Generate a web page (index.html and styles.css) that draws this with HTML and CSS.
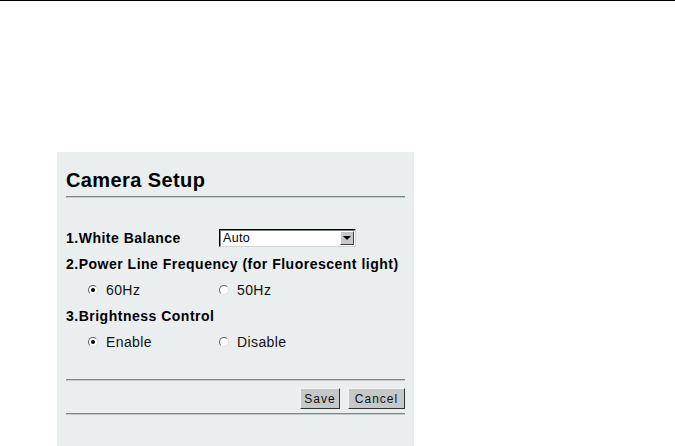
FILE: index.html
```html
<!DOCTYPE html>
<html>
<head>
<meta charset="utf-8">
<link rel="stylesheet" href="styles.css">
</head>
<body>
<div class="topbar"></div>
<div class="page">
  <div class="panel">
    <h1 class="title">Camera Setup</h1>
    <div class="rule"></div>
    <div class="form">
      <div class="row">
        <span class="label wb">1.White Balance</span>
        <span class="select"><span class="sel-text">Auto</span><span class="sel-btn"><span class="tri"></span></span></span>
      </div>
      <div class="row"><span class="label">2.Power Line Frequency (for Fluorescent light)</span></div>
      <div class="row opts">
        <span class="opt"><span class="radio on"></span>60Hz</span>
        <span class="opt"><span class="radio"></span>50Hz</span>
      </div>
      <div class="row"><span class="label">3.Brightness Control</span></div>
      <div class="row opts">
        <span class="opt"><span class="radio on"></span>Enable</span>
        <span class="opt"><span class="radio"></span>Disable</span>
      </div>
    </div>
    <div class="rule r2"></div>
    <div class="buttons">
      <span class="btn">Save</span>
      <span class="btn">Cancel</span>
    </div>
    <div class="rule"></div>
  </div>
</div>
</body>
</html>
```
FILE: styles.css
```css
html, body { margin: 0; padding: 0; background: #fff; }
body { font-family: "Liberation Sans", Arial, sans-serif; color: #000; height: 446px; overflow: hidden; }
.topbar { height: 1px; background: #000; }
.page { padding: 151px 0 0 57px; }
.panel { width: 357px; height: 300px; background: #eaeeee; padding: 16px 9px 0 9px; box-sizing: border-box; }
.title { margin: 0; font-size: 20px; line-height: 24px; font-weight: bold; letter-spacing: 0.4px; }
.rule { height: 0; border-top: 1px solid #7b8787; border-bottom: 1px solid #c4caca; margin-top: 4px; }
.form { padding-top: 27px; }
.row { height: 26px; display: flex; align-items: center; font-size: 14px; }
.label { font-weight: bold; letter-spacing: 0.5px; }
.wb { width: 153px; }
.select { width: 137px; height: 18px; box-sizing: border-box; background: #fff; border: 1px solid #000; border-right-color: #d4d4d4; border-bottom-color: #d4d4d4; box-shadow: inset 1px 1px 0 #808080; display: flex; align-items: center; justify-content: space-between; font-size: 12.5px; letter-spacing: 0.3px; }
.sel-text { padding-left: 3px; }
.sel-btn { width: 14px; height: 14px; margin-right: 1px; background: #c4c8c8; border: 1px solid; border-color: #fff #404040 #404040 #fff; box-sizing: border-box; display: flex; align-items: center; justify-content: center; }
.tri { width: 0; height: 0; border-left: 4px solid transparent; border-right: 4px solid transparent; border-top: 4px solid #000; }
.opts { padding-left: 22px; font-size: 14px; color: #111; letter-spacing: 0.4px; }
.opt { display: inline-flex; align-items: center; width: 131px; }
.radio { width: 10px; height: 10px; border-radius: 50%; box-sizing: border-box; background: #fff; border: 1px solid; border-color: #606060 #e0e0e0 #e0e0e0 #606060; margin-right: 8px; position: relative; }
.radio.on::after { content: ""; position: absolute; left: 2px; top: 2px; width: 4px; height: 4px; border-radius: 50%; background: #000; }
.r2 { margin-top: 24px; }
.buttons { display: flex; justify-content: flex-end; gap: 8px; padding-top: 7px; height: 21px; }
.btn { height: 21px; box-sizing: border-box; background: #c4c8c8; border: 1px solid; border-color: #f4f4f4 #303030 #303030 #f4f4f4; font-size: 12px; letter-spacing: 1px; display: inline-flex; align-items: center; justify-content: center; padding: 0 3px; color: #111; }
.btn:first-child { width: 40px; }
.btn:last-child { width: 57px; }
```
